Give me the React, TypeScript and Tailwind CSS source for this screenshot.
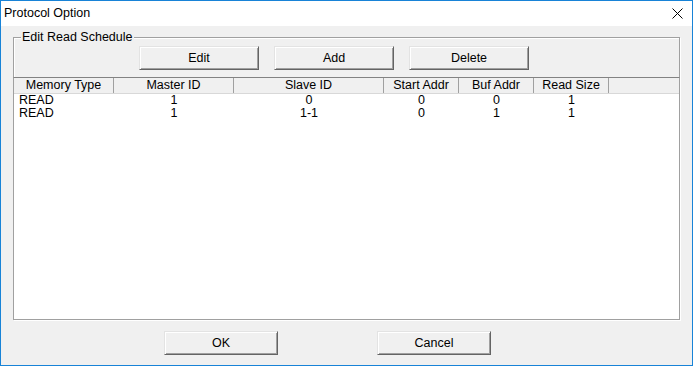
import React from "react";

const cols = [
  { name: "Memory Type", w: 100 },
  { name: "Master ID", w: 120 },
  { name: "Slave ID", w: 150 },
  { name: "Start Addr", w: 75 },
  { name: "Buf Addr", w: 75 },
  { name: "Read Size", w: 75 },
];

const rows = [
  ["READ", "1", "0", "0", "0", "1"],
  ["READ", "1", "1-1", "0", "1", "1"],
];

function Btn({ label, w }: { label: string; w: string }) {
  return (
    <div
      className={`${w} h-[24px] flex items-center justify-center bg-[#f0f0f0] border border-t-[#e3e3e3] border-l-[#e3e3e3] border-b-[#646464] border-r-[#646464] shadow-[inset_1px_1px_0_#ffffff,inset_-1px_-1px_0_#a0a0a0] text-[12.5px] text-black`}
    >
      {label}
    </div>
  );
}

export default function App() {
  return (
    <div
      className="w-[693px] h-[366px] border border-[#1883d7] flex flex-col bg-[#f0f0f0] text-black overflow-hidden"
      style={{ fontFamily: '"Liberation Sans", Arial, sans-serif' }}
    >
      <div className="h-[25px] bg-white flex items-center justify-between pl-[3px] pr-[9px] shrink-0">
        <span className="text-[12.5px] leading-none">Protocol Option</span>
        <svg width="11" height="11" viewBox="0 0 11 11">
          <path d="M0.5 0.5 L10.5 10.5 M10.5 0.5 L0.5 10.5" stroke="#000" strokeWidth="1" />
        </svg>
      </div>
      <div className="flex-1 flex flex-col">
        <div className="mt-[11px] mx-[12px] h-[283px] relative border border-[#a0a0a0] shadow-[1px_1px_0_#ffffff,inset_1px_1px_0_#ffffff] flex flex-col">
          <span className="absolute -top-[8px] left-[7px] bg-[#f0f0f0] px-[1px] text-[12.5px] leading-[14px]">
            Edit Read Schedule
          </span>
          <div className="flex gap-[15px] pl-[125px] pt-[8px]">
            <Btn label="Edit" w="w-[120px]" />
            <Btn label="Add" w="w-[120px]" />
            <Btn label="Delete" w="w-[120px]" />
          </div>
          <div className="mt-[7px] -mx-[1px] -mb-[1px] flex-1 border border-[#a0a0a0] border-t-[#828282] bg-white flex flex-col">
            <div className="flex h-[16px] bg-[#f0f0f0] border-b border-[#d8d8d8]">
              {cols.map((c) => (
                <div
                  key={c.name}
                  style={{ width: c.w }}
                  className="h-full flex items-center justify-center border-r border-[#a0a0a0] text-[12.5px] leading-none"
                >
                  {c.name}
                </div>
              ))}
            </div>
            {rows.map((r, i) => (
              <div key={i} className="flex h-[13px] text-[12.5px] leading-[13px]">
                {r.map((v, j) => (
                  <div
                    key={j}
                    style={{ width: cols[j].w }}
                    className={j === 0 ? "pl-[5px]" : "text-center"}
                  >
                    {v}
                  </div>
                ))}
              </div>
            ))}
          </div>
        </div>
        <div className="mt-[11px] flex pl-[163px] gap-[99px]">
          <Btn label="OK" w="w-[114px]" />
          <Btn label="Cancel" w="w-[114px]" />
        </div>
      </div>
    </div>
  );
}
